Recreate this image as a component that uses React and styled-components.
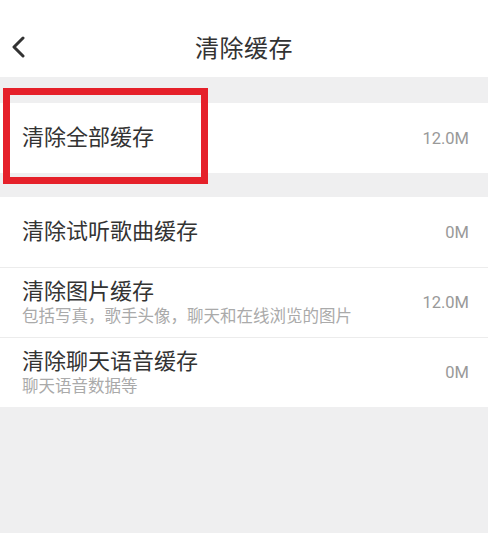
import React from 'react';
import styled, {createGlobalStyle} from "styled-components";

const GlobalStyle = createGlobalStyle`
  html, body {
    margin: 0;
    padding: 0;
    background: #efeff0;
    font-family: Roboto, "Noto Sans CJK SC", sans-serif;
  }
`;

const Header = styled.div`
  height: 77px;
  background: #fff;
  display: flex;
  align-items: center;
  justify-content: center;
  position: relative;
  padding-top: 16px;
  box-sizing: border-box;
`;

const BackButton = styled.button`
  position: absolute;
  left: 6px;
  top: 34px;
  width: 24px;
  height: 26px;
  border: none;
  background: none;
  padding: 0;
  display: flex;
  align-items: center;
  justify-content: center;
`;

const Title = styled.h1`
  margin: 0;
  font-size: 24px;
  font-weight: 400;
  color: #333;
  letter-spacing: 0.5px;
`;

const Group = styled.div`
  background: #fff;
  margin-top: ${p => p.$gap}px;
  position: relative;
`;

const Row = styled.div`
  height: ${p => p.$height}px;
  display: flex;
  align-items: center;
  justify-content: space-between;
  padding: 0 19px 0 22px;
  border-top: ${p => p.$divider ? '1px solid #ececec' : 'none'};
  box-sizing: border-box;
`;

const Texts = styled.div`
  display: flex;
  flex-direction: column;
`;

const Label = styled.div`
  font-size: 22px;
  color: #333;
  line-height: 28px;
`;

const Sub = styled.div`
  font-size: 16.5px;
  color: #aaa;
  line-height: 22px;
  margin-top: 0;
`;

const Value = styled.div`
  font-size: 16.5px;
  color: #999;
`;

const Highlight = styled.div`
  position: absolute;
  left: 3px;
  top: -15px;
  width: 205px;
  height: 96px;
  border: 7px solid #e5202a;
  box-sizing: border-box;
  pointer-events: none;
`;

const items = [
    {label: '清除试听歌曲缓存', value: '0M'},
    {label: '清除图片缓存', sub: '包括写真，歌手头像，聊天和在线浏览的图片', value: '12.0M'},
    {label: '清除聊天语音缓存', sub: '聊天语音数据等', value: '0M'},
];

export default function App() {
    return (
        <>
            <GlobalStyle/>
            <Header>
                <BackButton>
                    <svg width="16" height="22" viewBox="0 0 16 22">
                        <path d="M13 2 L4 11 L13 20" fill="none" stroke="#333" strokeWidth="3" strokeLinecap="round" strokeLinejoin="round"/>
                    </svg>
                </BackButton>
                <Title>清除缓存</Title>
            </Header>

            <Group $gap={26}>
                <Row $height={70}>
                    <Label>清除全部缓存</Label>
                    <Value>12.0M</Value>
                </Row>
                <Highlight/>
            </Group>

            <Group $gap={24}>
                {items.map((m, i) =>
                    <Row key={m.label} $height={70} $divider={i > 0}>
                        <Texts>
                            <Label>{m.label}</Label>
                            {m.sub && <Sub>{m.sub}</Sub>}
                        </Texts>
                        <Value>{m.value}</Value>
                    </Row>
                )}
            </Group>
        </>
    );
}
